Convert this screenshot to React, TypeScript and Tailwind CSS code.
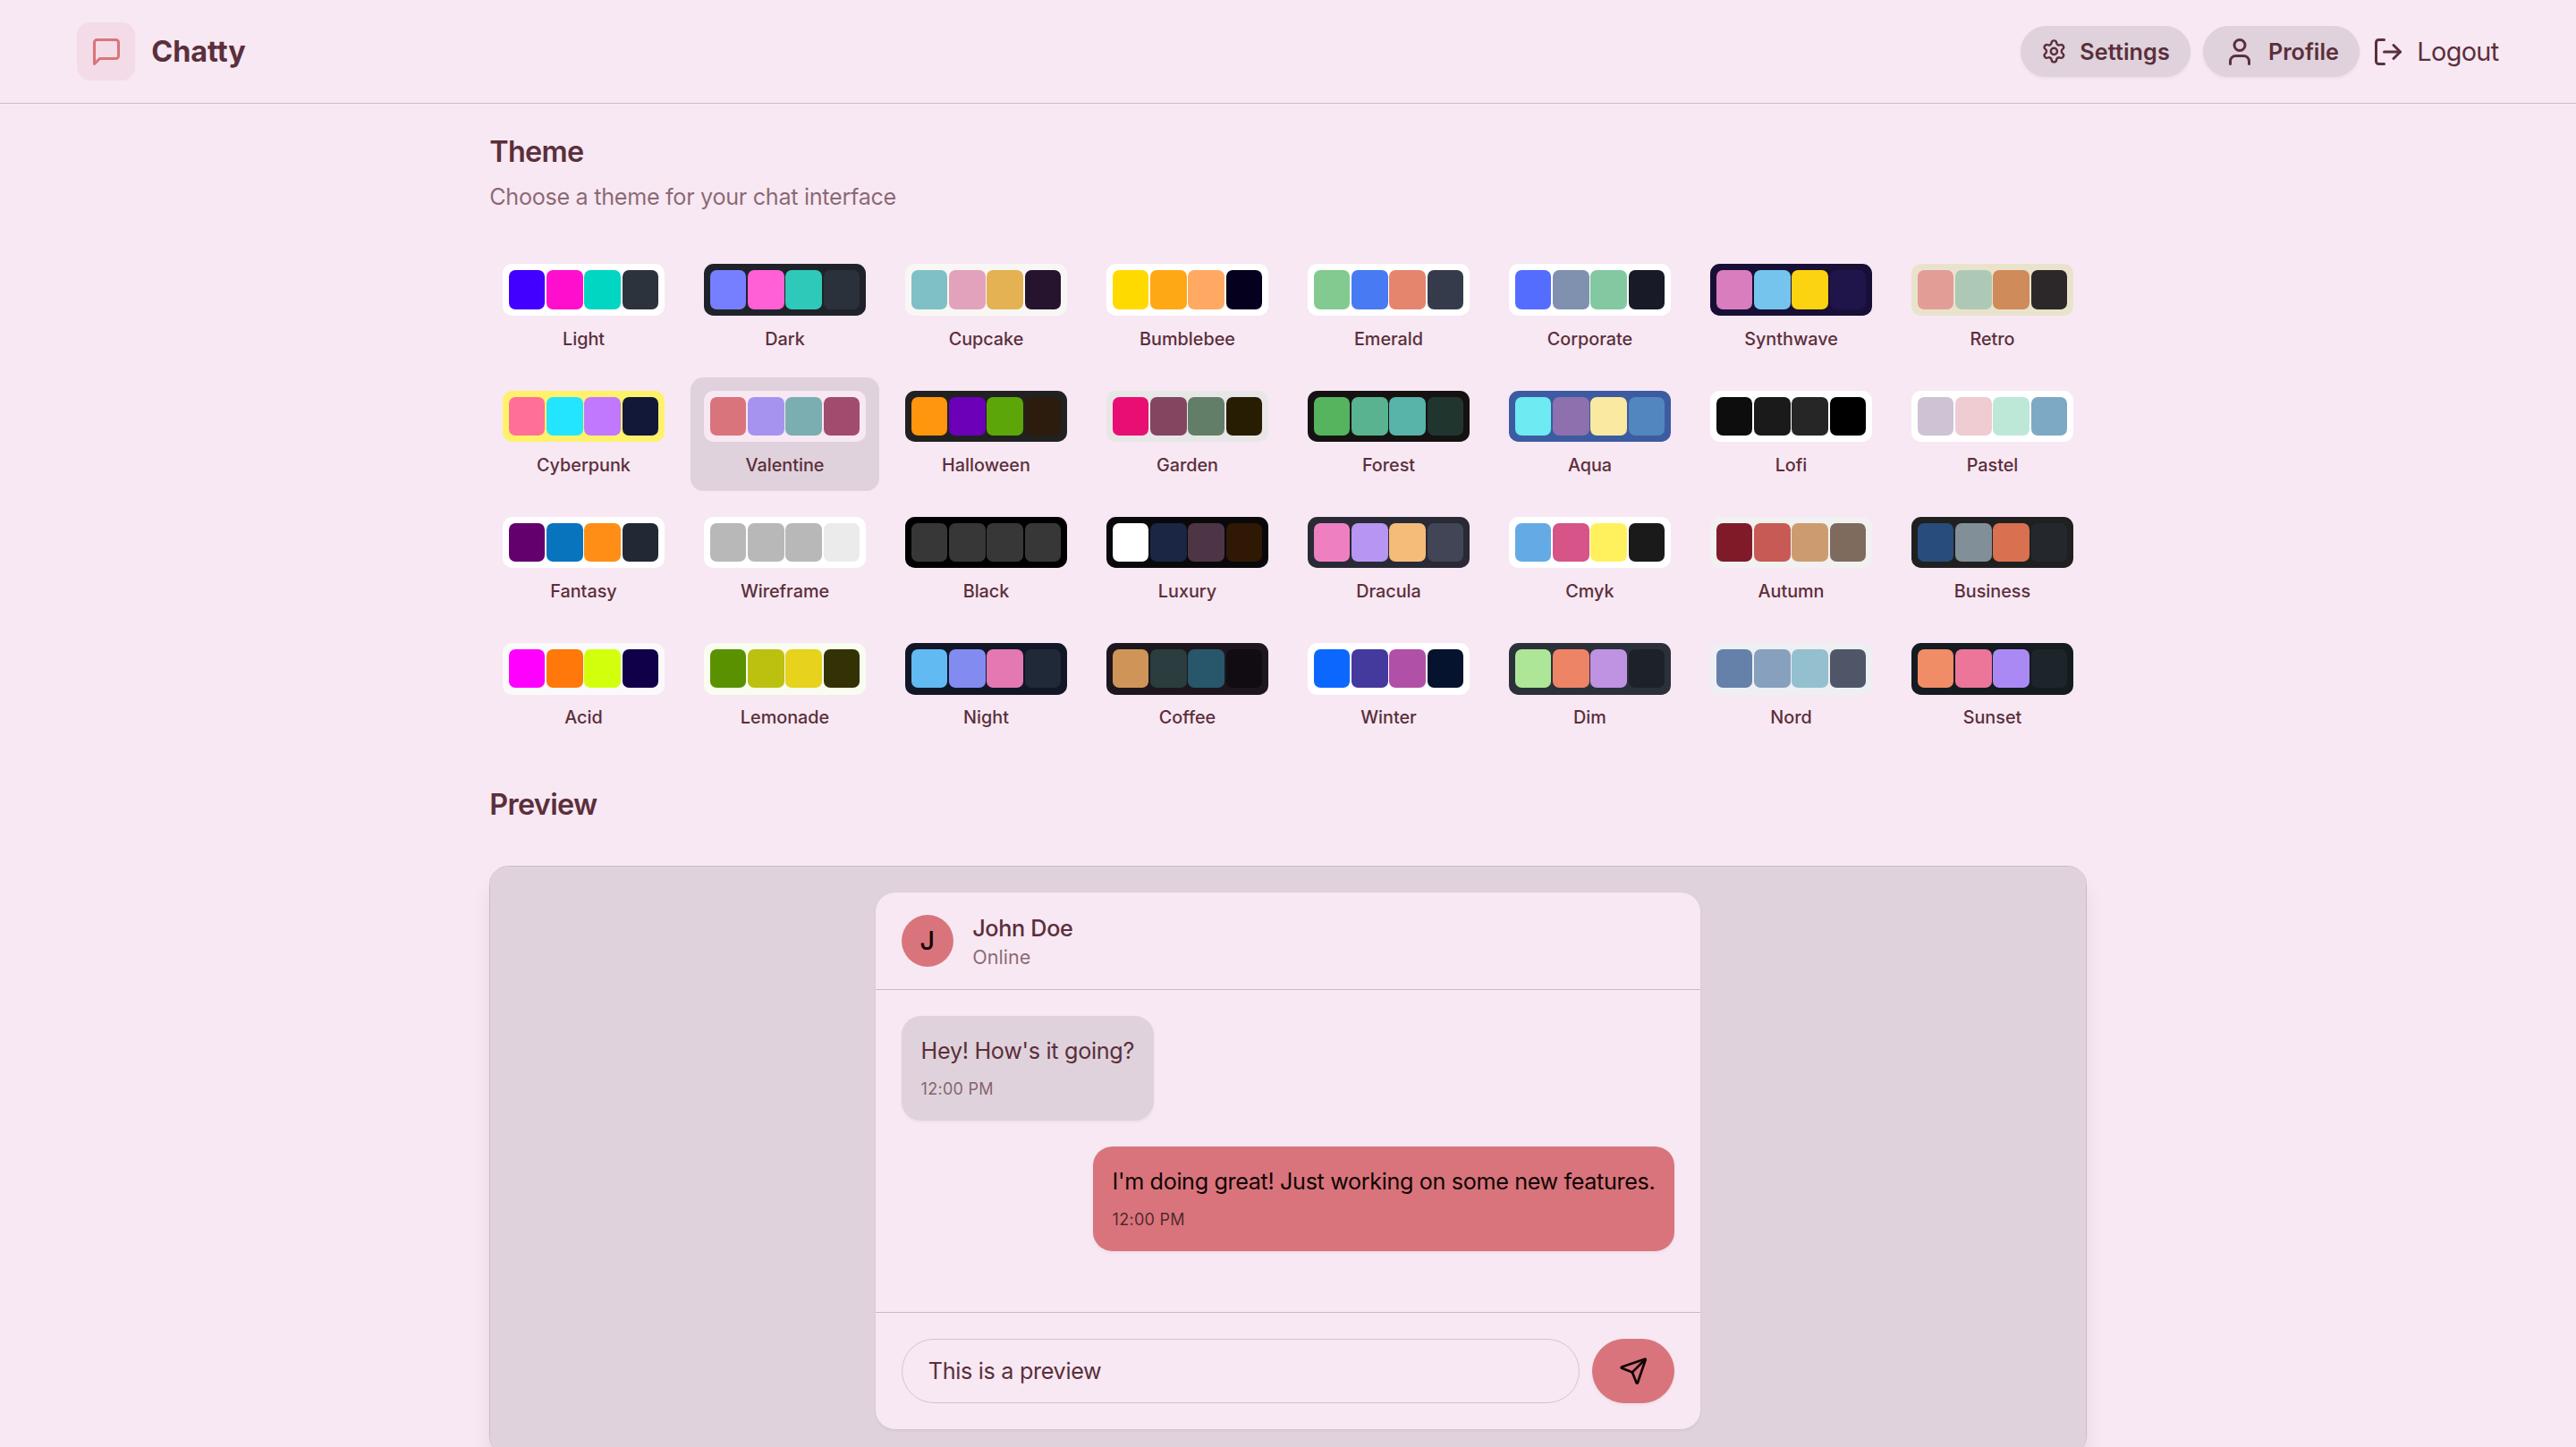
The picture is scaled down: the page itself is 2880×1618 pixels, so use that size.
import React, { useState, type FormEvent } from 'react'
import { LogOut, Settings, User } from 'lucide-react'

interface Theme {
  name: string
  base: string
  colors: string[] // primary, secondary, accent, neutral
}

const THEMES: Theme[] = [
  { name: 'light', base: '#ffffff', colors: ['#4100ff', '#ff0fcd', '#00d6c2', '#2d333d'] },
  { name: 'dark', base: '#1f2329', colors: ['#767fff', '#ff60d6', '#2ec9b9', '#2b313b'] },
  { name: 'cupcake', base: '#f9f7f5', colors: ['#7ec0c6', '#e3a2bb', '#e4b153', '#26142f'] },
  { name: 'bumblebee', base: '#ffffff', colors: ['#ffda00', '#ffa816', '#ffa963', '#04001d'] },
  { name: 'emerald', base: '#ffffff', colors: ['#82ca90', '#487af4', '#e6856e', '#353b4b'] },
  { name: 'corporate', base: '#ffffff', colors: ['#546dff', '#7f91af', '#82c9a2', '#181a28'] },
  { name: 'synthwave', base: '#180f37', colors: ['#d87dbd', '#75c4ee', '#fcd311', '#1f154b'] },
  { name: 'retro', base: '#e9e3cd', colors: ['#e29d97', '#adc9b6', '#cf8b5a', '#2c2829'] },
  { name: 'cyberpunk', base: '#fff26b', colors: ['#ff6f96', '#24e5ff', '#c178ff', '#121838'] },
  { name: 'valentine', base: '#f7e8f3', colors: ['#d9747c', '#a692ef', '#7aaeb1', '#a14c6e'] },
  { name: 'halloween', base: '#212121', colors: ['#ff960d', '#6b00b8', '#5da60a', '#2c1c0d'] },
  { name: 'garden', base: '#e8e7e7', colors: ['#e90f72', '#834560', '#627e69', '#271d03'] },
  { name: 'forest', base: '#161212', colors: ['#56b45e', '#59b391', '#58b3a9', '#20352e'] },
  { name: 'aqua', base: '#3d5ba1', colors: ['#6deaf2', '#8e70af', '#f9e9a1', '#5187be'] },
  { name: 'lofi', base: '#ffffff', colors: ['#0d0d0d', '#1a1a1a', '#262626', '#000000'] },
  { name: 'pastel', base: '#ffffff', colors: ['#cec2d5', '#eeccd1', '#bde7d7', '#7da9c4'] },
  { name: 'fantasy', base: '#ffffff', colors: ['#63006e', '#0774bd', '#ff8e16', '#212935'] },
  { name: 'wireframe', base: '#ffffff', colors: ['#b8b8b8', '#b8b8b8', '#b8b8b8', '#ebebeb'] },
  { name: 'black', base: '#000000', colors: ['#373737', '#373737', '#373737', '#373737'] },
  { name: 'luxury', base: '#09090b', colors: ['#ffffff', '#1a2643', '#4d3546', '#2f1905'] },
  { name: 'dracula', base: '#292a35', colors: ['#ee80c2', '#b696f2', '#f4bb79', '#424555'] },
  { name: 'cmyk', base: '#ffffff', colors: ['#64abe6', '#d65487', '#fff15e', '#1a1a1a'] },
  { name: 'autumn', base: '#f1f1f1', colors: ['#7f1a29', '#c75a54', '#cc9c70', '#7e6b5e'] },
  { name: 'business', base: '#202020', colors: ['#284d7c', '#808f98', '#d97151', '#24282d'] },
  { name: 'acid', base: '#fafafa', colors: ['#ff00ff', '#ff7809', '#d2ff0c', '#10004a'] },
  { name: 'lemonade', base: '#f9fdf0', colors: ['#5a9100', '#bcc00f', '#e7d21c', '#333205'] },
  { name: 'night', base: '#111727', colors: ['#62baf2', '#828cf0', '#e478b2', '#202938'] },
  { name: 'coffee', base: '#1e161e', colors: ['#cf9558', '#2b3d3e', '#28566a', '#110c11'] },
  { name: 'winter', base: '#ffffff', colors: ['#0c67ff', '#44399c', '#b150a7', '#06132e'] },
  { name: 'dim', base: '#2b303b', colors: ['#aee698', '#ee8466', '#bf93e2', '#1d2129'] },
  { name: 'nord', base: '#edeff3', colors: ['#6580a9', '#87a0be', '#94bfce', '#4f5668'] },
  { name: 'sunset', base: '#141b21', colors: ['#f08c66', '#eb7699', '#ab89f4', '#1d252b'] },
]

const PREVIEW_MESSAGES = [
  { id: 1, content: "Hey! How's it going?", isSent: false },
  { id: 2, content: "I'm doing great! Just working on some new features.", isSent: true },
]

const MessageIcon = () => (
  <svg viewBox="0 0 24 24" className="size-5 text-[#d9747c]" fill="none" stroke="currentColor" strokeWidth="2" strokeLinecap="round" strokeLinejoin="round">
    <path d="M21 15a2 2 0 0 1-2 2H7l-4 4V5a2 2 0 0 1 2-2h14a2 2 0 0 1 2 2z" />
  </svg>
)

const SendIcon = () => (
  <svg viewBox="0 0 24 24" className="size-[18px]" fill="none" stroke="currentColor" strokeWidth="2" strokeLinecap="round" strokeLinejoin="round">
    <path d="M14.536 21.686a.5.5 0 0 0 .937-.024l6.5-19a.496.496 0 0 0-.635-.635l-19 6.5a.5.5 0 0 0-.024.937l7.93 3.18a2 2 0 0 1 1.112 1.11z" />
    <path d="m21.854 2.147-10.94 10.939" />
  </svg>
)

const Navbar = () => (
  <header className="border-b border-[#cabbc7] -mb-[0.5px]">
    <div className="flex items-center justify-between h-16 max-w-[1536px] mx-auto px-4">
      <div className="flex items-center gap-2.5">
        <div className="size-9 rounded-lg bg-[#d9747c]/10 flex items-center justify-center">
          <MessageIcon />
        </div>
        <h1 className="text-lg font-bold pt-px">Chatty</h1>
      </div>

      <div className="flex items-center gap-2">
        <button className="h-8 px-3 rounded-2xl border border-[#dfd2dc] bg-[#dfd2dc] shadow-xs flex items-center gap-2 text-sm font-semibold">
          <Settings className="size-4" />
          <span className="tracking-[0.06px]">Settings</span>
        </button>
        <button className="h-8 px-3 rounded-2xl border border-[#dfd2dc] bg-[#dfd2dc] shadow-xs flex items-center gap-2 text-sm font-semibold">
          <User className="size-5" />
          <span>Profile</span>
        </button>
        <button className="flex items-center gap-2">
          <LogOut className="size-5" />
          <span className="tracking-[-0.34px]">Logout</span>
        </button>
      </div>
    </div>
  </header>
)

interface ThemeButtonProps {
  theme: Theme
  active: boolean
  onSelect: (name: string) => void
}

const ThemeButton = ({ theme, active, onSelect }: ThemeButtonProps) => (
  <button
    onClick={() => onSelect(theme.name)}
    className={`flex flex-col items-center gap-1.5 p-2 rounded-lg transition-colors ${active ? 'bg-[#dfd2dc]' : 'hover:bg-[#dfd2dc]/50'}`}
  >
    <div className="h-8 w-full rounded-md overflow-hidden grid grid-cols-4 gap-px p-1" style={{ backgroundColor: theme.base }}>
      {theme.colors.map((color, i) => (
        <div key={i} className="rounded" style={{ backgroundColor: color }} />
      ))}
    </div>
    <span className="text-[11px] leading-[1.5] font-medium truncate w-full text-center pt-[0.6px] -mb-[0.6px]">
      {theme.name.charAt(0).toUpperCase() + theme.name.slice(1)}
    </span>
  </button>
)

const ChatPreview = () => {
  const [text, setText] = useState('This is a preview')

  const handleSubmit = (e: FormEvent) => {
    e.preventDefault()
  }

  return (
    <div className="rounded-xl border border-[#cabbc7] overflow-hidden bg-[#f7e8f3] shadow-lg">
      <div className="p-4 bg-[#dfd2dc]">
        <div className="max-w-lg mx-auto bg-[#f7e8f3] rounded-xl shadow-xs overflow-hidden">
          <div className="px-4 py-3 border-b border-[#cabbc7] flex items-center gap-3">
            <div className="size-8 rounded-full bg-[#d9747c] flex items-center justify-center text-[#110405] font-medium">J</div>
            <div>
              <h3 className="font-medium text-sm tracking-[-0.18px]">John Doe</h3>
              <p className="text-xs text-[#5b2f3b]/70">Online</p>
            </div>
          </div>

          <div className="p-4 space-y-4 h-[200px] overflow-hidden">
            {PREVIEW_MESSAGES.map((message) => (
              <div key={message.id} className={`flex ${message.isSent ? 'justify-end' : 'justify-start'}`}>
                <div className={`max-w-[80%] rounded-xl p-3 shadow-xs ${message.isSent ? 'bg-[#d9747c] text-[#110405]' : 'bg-[#dfd2dc]'}`}>
                  <p className={`text-sm ${message.isSent ? 'tracking-[-0.2px]' : 'tracking-[-0.17px]'}`}>{message.content}</p>
                  <p className={`text-[10px] leading-[1.5] tracking-[0.16px] mt-1.5 ${message.isSent ? 'text-[#110405]/70' : 'text-[#5b2f3b]/70'}`}>12:00 PM</p>
                </div>
              </div>
            ))}
          </div>

          <form onSubmit={handleSubmit} className="p-4 border-t border-[#cabbc7] flex gap-2">
            <input
              type="text"
              value={text}
              onChange={(e) => setText(e.target.value)}
              className="flex-1 min-w-0 h-10 px-4 text-sm tracking-[-0.18px] rounded-[32px] border border-[#5b2f3b]/20 outline-none"
            />
            <button type="submit" className="h-10 px-4 rounded-[32px] border border-[#d9747c] bg-[#d9747c] text-[#110405] shadow-xs flex items-center justify-center">
              <SendIcon />
            </button>
          </form>
        </div>
      </div>
    </div>
  )
}

function App() {
  const [theme, setTheme] = useState('valentine')

  return (
    <div className="[zoom:1.8] h-[899px] overflow-hidden bg-[#f7e8f3] text-[#5b2f3b] font-['Inter',sans-serif] antialiased">
      <Navbar />
      <main className="max-w-5xl mx-auto px-4 pt-4 space-y-6">
        <div className="flex flex-col gap-1">
          <h2 className="text-lg font-semibold tracking-[-0.38px] pt-[0.6px] -mb-[0.6px]">Theme</h2>
          <p className="text-sm tracking-[-0.17px] text-[#5b2f3b]/70">Choose a theme for your chat interface</p>
        </div>

        <div className="grid grid-cols-8 gap-2">
          {THEMES.map((t) => (
            <ThemeButton key={t.name} theme={t} active={theme === t.name} onSelect={setTheme} />
          ))}
        </div>

        <h3 className="text-lg leading-[27px] font-semibold tracking-[-0.36px] pt-px">Preview</h3>
        <ChatPreview />
      </main>
    </div>
  )
}

export default App
